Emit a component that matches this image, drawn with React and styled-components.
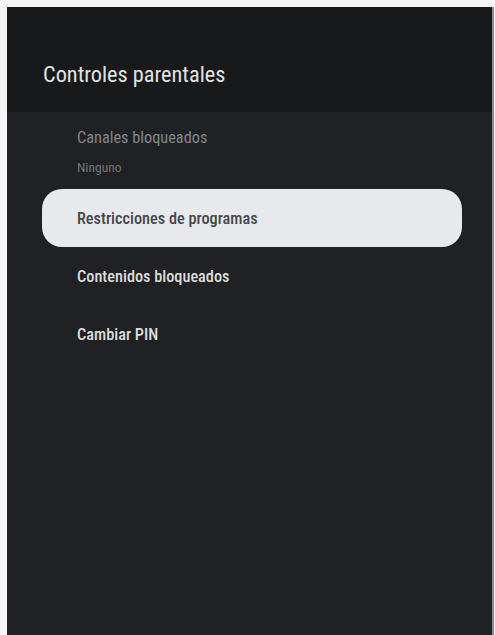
import React from "react"
import styled, { createGlobalStyle } from "styled-components"

const GlobalStyle = createGlobalStyle`
  html, body {
    margin: 0;
    padding: 0;
    background: #ffffff;
  }
  body {
    font-family: Roboto, "Liberation Sans", sans-serif;
  }
`

const Screen = styled.div`
  width: 495px;
  height: 635px;
  box-sizing: border-box;
  padding: 7px 1px 0 7px;
  background: #f4f4f4;
`

const Panel = styled.div`
  height: 100%;
  display: flex;
  flex-direction: column;
  background: #202124;
  border-right: 2px solid #8e8f91;
  box-sizing: border-box;
`

const Header = styled.header`
  height: 105px;
  flex-shrink: 0;
  display: flex;
  align-items: flex-start;
  padding: 53px 0 0 36px;
  background: #18191b;
  box-sizing: border-box;
`

const Title = styled.h1`
  margin: 0;
  font-size: 22.3px;
  line-height: 28px;
  font-weight: 400;
  font-stretch: condensed;
  color: #e2e2e3;
`

const List = styled.ul`
  list-style: none;
  margin: 0;
  padding: 0 30px 0 35px;
  display: flex;
  flex-direction: column;
`

const Item = styled.li`
  display: flex;
  flex-direction: column;
  justify-content: center;
  height: ${(p) => (p.$tall ? "77px" : "58px")};
  padding: 0 35px;
  box-sizing: border-box;
  border-radius: 20px;
  background: ${(p) => (p.$focused ? "#e8e9ed" : "transparent")};
`

const Label = styled.span`
  font-size: 16.3px;
  line-height: 19px;
  font-stretch: condensed;
  color: ${(p) => (p.$focused ? "#45464a" : p.$dim ? "#85868a" : "#dcdcde")};
  font-weight: ${(p) => (p.$dim ? 400 : 500)};
`

const Sub = styled.span`
  margin-top: 13px;
  font-size: 13.5px;
  line-height: 14px;
  font-stretch: condensed;
  color: #74757a;
`

const items = [
  { label: "Canales bloqueados", sub: "Ninguno", dim: true },
  { label: "Restricciones de programas", focused: true },
  { label: "Contenidos bloqueados" },
  { label: "Cambiar PIN" },
]

export default function App() {
  return (
    <>
      <GlobalStyle />
      <Screen>
        <Panel>
          <Header>
            <Title>Controles parentales</Title>
          </Header>
          <List>
            {items.map((it) => (
              <Item key={it.label} $focused={it.focused} $tall={!!it.sub}>
                <Label $focused={it.focused} $dim={it.dim}>
                  {it.label}
                </Label>
                {it.sub && <Sub>{it.sub}</Sub>}
              </Item>
            ))}
          </List>
        </Panel>
      </Screen>
    </>
  )
}
